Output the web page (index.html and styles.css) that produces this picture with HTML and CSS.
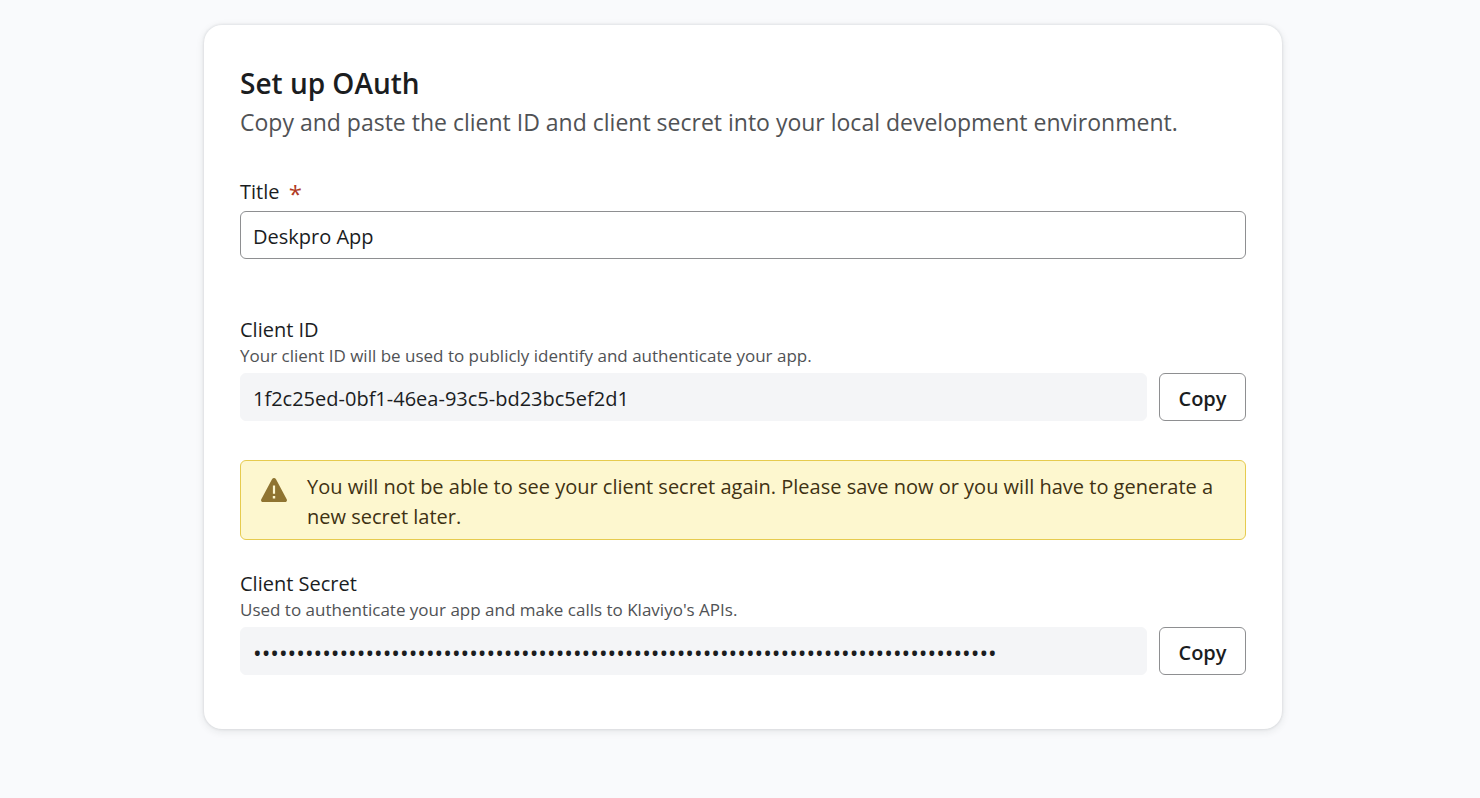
FILE: index.html
```html
<!DOCTYPE html>
<html lang="en">
<head>
<meta charset="utf-8">
<meta name="viewport" content="width=device-width, initial-scale=1">
<title>Set up OAuth</title>
<link rel="stylesheet" href="styles.css">
</head>
<body>
<main class="card">
  <header class="intro">
    <h1 class="heading">Set up OAuth</h1>
    <p class="lead">Copy and paste the client ID and client secret into your local development environment.</p>
  </header>

  <div class="field field-title">
    <label class="label" for="title">Title <span class="required">*</span></label>
    <input class="input" id="title" type="text" value="Deskpro App" required>
  </div>

  <div class="field field-id">
    <label class="label" for="client-id">Client ID</label>
    <p class="hint" id="client-id-hint">Your client ID will be used to publicly identify and authenticate your app.</p>
    <div class="copy-row">
      <input class="input input-readonly" id="client-id" type="text" value="1f2c25ed-0bf1-46ea-93c5-bd23bc5ef2d1" aria-describedby="client-id-hint" readonly>
      <button class="copy" type="button">Copy</button>
    </div>
  </div>

  <div class="warning" role="alert">
    <svg class="warning-icon" viewBox="0 0 26 24" aria-hidden="true">
      <path fill="#8f7431" fill-rule="evenodd" d="M11 1.200C12-.3 14-.3 15 1.200l10.700 20c.7 1.300-.1 2.800-1.600 2.800H1.900C.4 24-.4 22.500.3 21.200zM11.900 7.500v8.300h2.200V7.500zM11.800 18v2.400h2.400V18z"/>
    </svg>
    <p class="warning-text">You will not be able to see your client secret again. Please save now or you will have to generate a new secret later.</p>
  </div>

  <div class="field">
    <label class="label" for="client-secret">Client Secret</label>
    <p class="hint" id="client-secret-hint">Used to authenticate your app and make calls to Klaviyo's APIs.</p>
    <div class="copy-row">
      <input class="input input-readonly input-secret" id="client-secret" type="password" value="00000000000000000000000000000000000000000000000000000000000000000000000000000000000000" aria-describedby="client-secret-hint" readonly>
      <button class="copy" type="button">Copy</button>
    </div>
  </div>
</main>
</body>
</html>
```
FILE: styles.css
```css
* {
  box-sizing: border-box;
}

body {
  margin: 0;
  padding: 25px 198px 68px 204px;
  background: #f9fafc;
  color: #1b1d1f;
  font: 20px/30px "Segoe UI", "Open Sans", "Noto Sans", sans-serif;
}

h1,
p {
  margin: 0;
}

.card {
  padding: 39px 36px 54px;
  border-radius: 18px;
  background: #fff;
  box-shadow: 0 0 3px rgba(30, 35, 40, 0.14), 0 2px 8px rgba(30, 35, 40, 0.1);
}

.intro {
  margin-bottom: 36px;
}

.heading {
  font-size: 28px;
  font-weight: 600;
  line-height: 38px;
}

.lead {
  color: #505255;
  font-size: 23px;
  line-height: 40px;
}

.field {
  display: flex;
  flex-direction: column;
}

.field-title {
  margin-bottom: 57px;
}

.field-id {
  margin-bottom: 39px;
}

.label {
  line-height: 28px;
}

.field-title .label {
  padding-bottom: 5px;
}

.required {
  margin-left: 4px;
  color: #b03a24;
  font-size: 24px;
  line-height: 20px;
  vertical-align: -4px;
}

.hint {
  padding-bottom: 5px;
  color: #505255;
  font-size: 17px;
  line-height: 24px;
}

.input {
  width: 100%;
  min-width: 0;
  height: 48px;
  padding: 2px 12px 0;
  border: 1px solid #8e8f91;
  border-radius: 6px;
  background: #fff;
  color: inherit;
  font: inherit;
}

.input-readonly {
  flex: 1;
  border-color: #f4f5f7;
  background: #f4f5f7;
}

.input-secret {
  padding-top: 4px;
  font-size: 23px;
}

.copy-row {
  display: flex;
  gap: 12px;
}

.copy {
  min-width: 87px;
  height: 48px;
  padding: 4px 18px 0;
  border: 1px solid #8e8f91;
  border-radius: 6px;
  background: #fff;
  color: inherit;
  font: inherit;
  font-weight: 600;
}

.warning {
  display: flex;
  align-items: flex-start;
  gap: 20px;
  margin-bottom: 30px;
  padding: 11px 20px 7px;
  border: 1px solid #e6cb4f;
  border-radius: 6px;
  background: #fdf7cf;
  color: #3f3213;
}

.warning-icon {
  flex: none;
  width: 26px;
  height: 24px;
  margin-top: 6px;
}
```
